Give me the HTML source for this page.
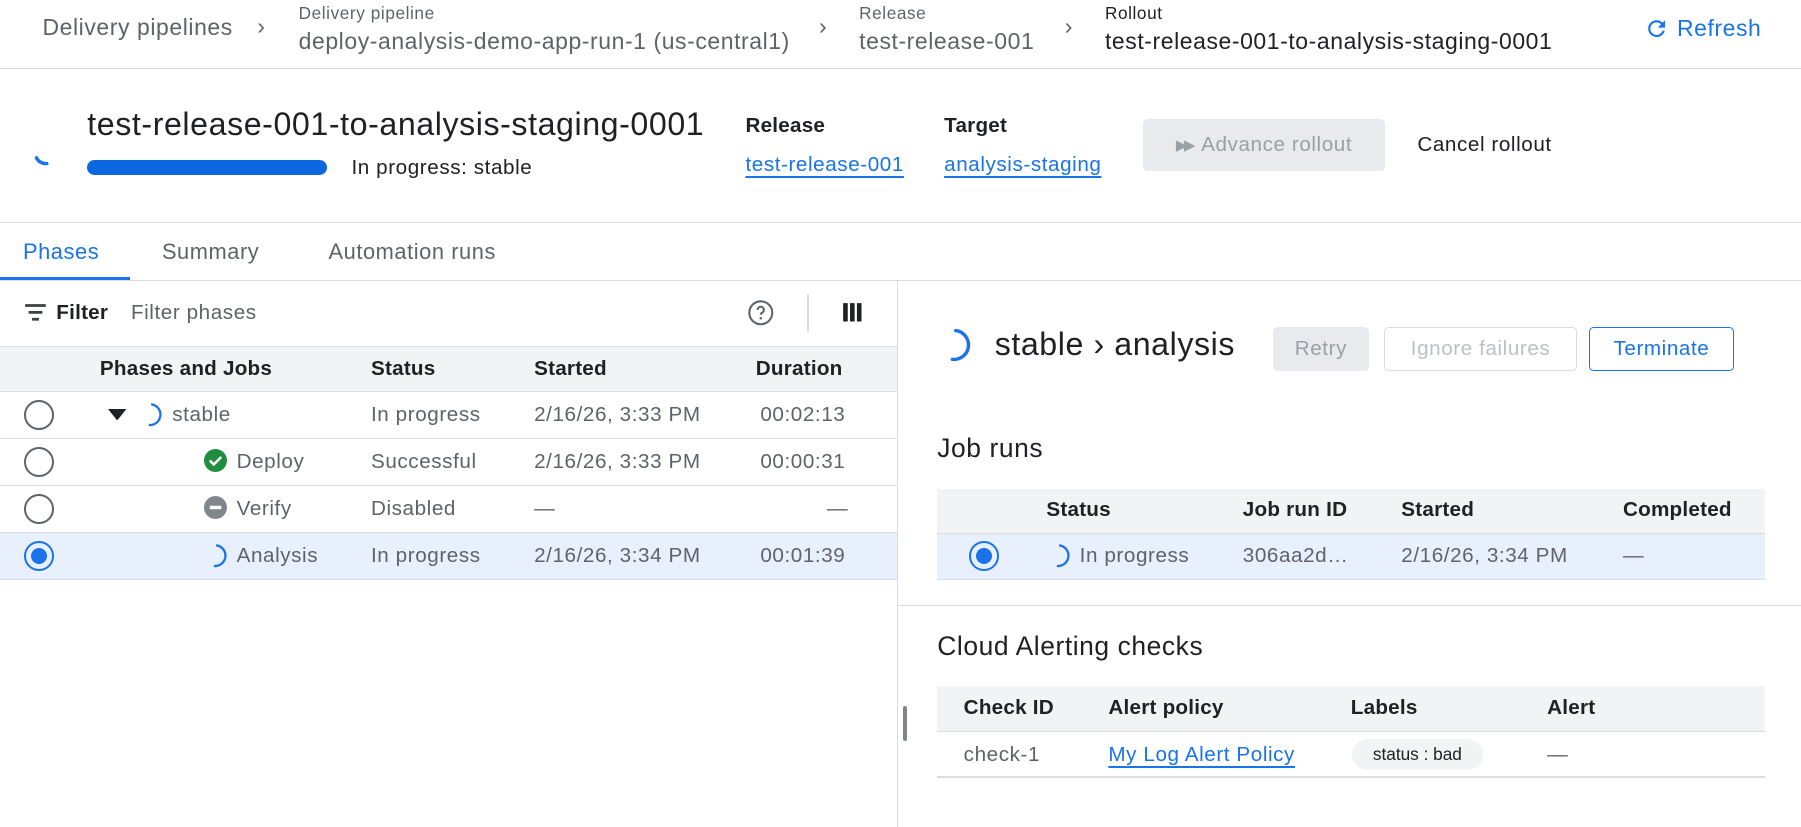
<!DOCTYPE html>
<html><head><meta charset="utf-8"><style>
*{box-sizing:border-box;margin:0;padding:0}
html,body{width:1801px;height:827px;overflow:hidden;background:#fff}
#w{width:1568px;height:720px;position:relative;zoom:1.14860;font-family:"Liberation Sans",Arial,sans-serif;color:#202124;letter-spacing:0.5px}
.a{position:absolute;white-space:nowrap}
.g{color:#5f6368}
.b{color:#1a73e8}
.hl{position:absolute;height:1px;background:#dadce0}
.lnk{color:#1a73e8;text-decoration:underline;text-underline-offset:4px}
.rad{position:absolute;width:26px;height:26px;border:2px solid #5f6368;border-radius:50%}
.rad.on{border-color:#1a73e8}
.rad.on:after{content:"";position:absolute;left:4px;top:4px;width:14px;height:14px;border-radius:50%;background:#1a73e8}
.btn{position:absolute;border-radius:4px;font-size:18px;display:flex;align-items:center;justify-content:center}
.t{font-size:18px}
.h{font-size:18px;font-weight:bold;letter-spacing:0.2px}
</style></head><body><div id="w">
<!-- breadcrumb -->
<div class="a g" style="left:37px;top:12px;font-size:20px">Delivery pipelines</div>
<div class="a g" style="left:224px;top:11px;font-size:20px">›</div>
<div class="a g" style="left:260px;top:3px;font-size:15px">Delivery pipeline</div>
<div class="a g" style="left:260px;top:24px;font-size:20px">deploy-analysis-demo-app-run-1 (us-central1)</div>
<div class="a g" style="left:713px;top:11px;font-size:20px">›</div>
<div class="a g" style="left:748px;top:3px;font-size:15px">Release</div>
<div class="a g" style="left:748px;top:24px;font-size:20px">test-release-001</div>
<div class="a g" style="left:927px;top:11px;font-size:20px">›</div>
<div class="a" style="left:962px;top:3px;font-size:15px">Rollout</div>
<div class="a" style="left:962px;top:24px;font-size:20px">test-release-001-to-analysis-staging-0001</div>
<svg class="a" style="left:1431px;top:14px" width="22" height="22" viewBox="0 0 24 24"><path d="M17.65 6.35A7.96 7.96 0 0 0 12 4a8 8 0 1 0 7.73 10h-2.08A6 6 0 1 1 12 6c1.66 0 3.14.69 4.22 1.78L13 11h7V4z" fill="#1a73e8"/></svg>
<div class="a b" style="left:1460px;top:13px;font-size:20px">Refresh</div>
<div class="hl" style="left:0;top:59px;width:1568px"></div>
<!-- title -->
<svg class="a" style="left:22px;top:118px" width="30" height="30" viewBox="0 0 30 30"><path d="M10 19 A9 9 0 0 0 19 24" stroke="#1a73e8" stroke-width="3" fill="none" stroke-linecap="round"/></svg>
<div class="a" style="left:76px;top:92px;font-size:28px">test-release-001-to-analysis-staging-0001</div>
<div class="a" style="left:76px;top:139px;width:209px;height:13px;border-radius:7px;background:#0b67dd"></div>
<div class="a t" style="left:306px;top:136px">In progress: stable</div>
<div class="a h" style="left:649px;top:99px">Release</div>
<div class="a lnk t" style="left:649px;top:133px">test-release-001</div>
<div class="a h" style="left:822px;top:99px">Target</div>
<div class="a lnk t" style="left:822px;top:133px">analysis-staging</div>
<div class="btn" style="left:995px;top:104px;width:211px;height:45px;background:#e8eaed;color:#9aa0a6"><span style="font-size:13px;margin-right:8px;letter-spacing:-3px">▶▶</span>Advance rollout</div>
<div class="a t" style="left:1234px;top:116px">Cancel rollout</div>
<div class="hl" style="left:0;top:193px;width:1568px"></div>
<!-- tabs -->
<div class="a b" style="left:20px;top:208px;font-size:19px">Phases</div>
<div class="a g" style="left:141px;top:208px;font-size:19px">Summary</div>
<div class="a g" style="left:286px;top:208px;font-size:19px">Automation runs</div>
<div class="a" style="left:0;top:241px;width:113px;height:3px;background:#1a73e8"></div>
<div class="hl" style="left:0;top:244px;width:1568px"></div>
<div class="a" style="left:781px;top:244px;width:1px;height:476px;background:#dadce0"></div>
<div class="a" style="left:786px;top:615px;width:4px;height:30px;border-radius:2px;background:#80868b"></div>
<!-- filter -->
<svg class="a" style="left:21px;top:263px" width="20" height="18" viewBox="0 0 20 18"><path d="M1 3h18M4 9h12M7 15h6" stroke="#3c4043" stroke-width="2.4"/></svg>
<div class="a h" style="left:49px;top:262px">Filter</div>
<div class="a g t" style="left:114px;top:262px">Filter phases</div>
<svg class="a" style="left:650px;top:260px" width="24" height="24" viewBox="0 0 24 24"><circle cx="12" cy="12" r="10" stroke="#5f6368" stroke-width="1.8" fill="none"/><path d="M9.3 9.5a2.7 2.7 0 1 1 3.8 2.4c-.8.4-1.1.9-1.1 1.8" stroke="#5f6368" stroke-width="1.8" fill="none"/><circle cx="12" cy="16.8" r="1.1" fill="#5f6368"/></svg>
<div class="a" style="left:703px;top:256px;width:1px;height:33px;background:#dadce0"></div>
<svg class="a" style="left:733px;top:263px" width="18" height="18" viewBox="0 0 18 18"><path d="M1 1h4v16H1zM7 1h4v16H7zM13 1h4v16h-4z" fill="#202124"/></svg>
<!-- left table -->
<div class="a" style="left:0;top:301px;width:781px;height:40px;background:#f1f3f4;border-top:1px solid #dadce0;border-bottom:1px solid #dadce0"></div>
<div class="a h" style="left:87px;top:311px">Phases and Jobs</div>
<div class="a h" style="left:323px;top:311px">Status</div>
<div class="a h" style="left:465px;top:311px">Started</div>
<div class="a h" style="left:658px;top:311px">Duration</div>
<div class="a" style="left:0;top:464px;width:781px;height:41px;background:#e8f0fe"></div>
<div class="hl" style="left:0;top:381px;width:781px"></div>
<div class="hl" style="left:0;top:422px;width:781px"></div>
<div class="hl" style="left:0;top:463px;width:781px"></div>
<div class="hl" style="left:0;top:504px;width:781px"></div>
<div class="rad" style="left:21px;top:348px"></div>
<div class="rad" style="left:21px;top:389px"></div>
<div class="rad" style="left:21px;top:430px"></div>
<div class="rad on" style="left:21px;top:471px"></div>
<svg class="a" style="left:94px;top:356px" width="16" height="10"><path d="M0 0h16L8 10z" fill="#202124"/></svg>
<svg class="a" style="left:124px;top:350px" width="20" height="22" viewBox="0 0 20 22"><path d="M8 2a9 9 0 0 1 -2 18" stroke="#1a73e8" stroke-width="2" fill="none"/></svg>
<div class="a g t" style="left:150px;top:351px">stable</div>
<svg class="a" style="left:178px;top:391px" width="20" height="20"><circle cx="10" cy="10" r="10" fill="#1e8e3e"/><path d="M5 10l3.5 3.5L15 7" stroke="#fff" stroke-width="2.2" fill="none"/></svg>
<div class="a g t" style="left:206px;top:392px">Deploy</div>
<svg class="a" style="left:178px;top:432px" width="20" height="20"><circle cx="10" cy="10" r="10" fill="#80868b"/><path d="M5 10h10" stroke="#fff" stroke-width="3"/></svg>
<div class="a g t" style="left:206px;top:433px">Verify</div>
<svg class="a" style="left:180px;top:473px" width="20" height="22" viewBox="0 0 20 22"><path d="M8 2a9 9 0 0 1 -2 18" stroke="#1a73e8" stroke-width="2" fill="none"/></svg>
<div class="a g t" style="left:206px;top:474px">Analysis</div>
<div class="a g t" style="left:323px;top:351px">In progress</div>
<div class="a g t" style="left:323px;top:392px">Successful</div>
<div class="a g t" style="left:323px;top:433px">Disabled</div>
<div class="a g t" style="left:323px;top:474px">In progress</div>
<div class="a g t" style="left:465px;top:351px">2/16/26, 3:33 PM</div>
<div class="a g t" style="left:465px;top:392px">2/16/26, 3:33 PM</div>
<div class="a g t" style="left:465px;top:433px">—</div>
<div class="a g t" style="left:465px;top:474px">2/16/26, 3:34 PM</div>
<div class="a g t" style="left:662px;top:351px">00:02:13</div>
<div class="a g t" style="left:662px;top:392px">00:00:31</div>
<div class="a g t" style="left:720px;top:433px">—</div>
<div class="a g t" style="left:662px;top:474px">00:01:39</div>
<!-- right panel -->
<svg class="a" style="left:820px;top:284px" width="30" height="34" viewBox="0 0 30 34"><path d="M12 4a12 12 0 0 1 -3 25" stroke="#1a73e8" stroke-width="3" fill="none" stroke-linecap="round"/></svg>
<div class="a" style="left:866px;top:284px;font-size:28px">stable › analysis</div>
<div class="btn" style="left:1108px;top:285px;width:84px;height:38px;background:#e8eaed;color:#9aa0a6">Retry</div>
<div class="btn" style="left:1205px;top:285px;width:168px;height:38px;border:1px solid #dadce0;color:#bdc1c6">Ignore failures</div>
<div class="btn" style="left:1383px;top:285px;width:127px;height:38px;border:1px solid #1a73e8;color:#1a73e8">Terminate</div>
<div class="a" style="left:816px;top:377px;font-size:23px">Job runs</div>
<div class="a" style="left:816px;top:426px;width:721px;height:39px;background:#f1f3f4;border-bottom:1px solid #dadce0"></div>
<div class="a" style="left:816px;top:465px;width:721px;height:40px;background:#e8f0fe;border-bottom:1px solid #dadce0"></div>
<div class="a h" style="left:911px;top:434px">Status</div>
<div class="a h" style="left:1082px;top:434px">Job run ID</div>
<div class="a h" style="left:1220px;top:434px">Started</div>
<div class="a h" style="left:1413px;top:434px">Completed</div>
<div class="rad on" style="left:844px;top:471px"></div>
<svg class="a" style="left:914px;top:473px" width="20" height="22" viewBox="0 0 20 22"><path d="M8 2a9 9 0 0 1 -2 18" stroke="#1a73e8" stroke-width="2" fill="none"/></svg>
<div class="a g t" style="left:940px;top:474px">In progress</div>
<div class="a g t" style="left:1082px;top:474px">306aa2d…</div>
<div class="a g t" style="left:1220px;top:474px">2/16/26, 3:34 PM</div>
<div class="a g t" style="left:1413px;top:474px">—</div>
<div class="hl" style="left:782px;top:527px;width:786px"></div>
<div class="a" style="left:816px;top:549px;font-size:23px">Cloud Alerting checks</div>
<div class="a" style="left:816px;top:597px;width:721px;height:40px;background:#f1f3f4;border-bottom:1px solid #dadce0"></div>
<div class="hl" style="left:816px;top:676px;width:721px"></div>
<div class="a h" style="left:839px;top:606px">Check ID</div>
<div class="a h" style="left:965px;top:606px">Alert policy</div>
<div class="a h" style="left:1176px;top:606px">Labels</div>
<div class="a h" style="left:1347px;top:606px">Alert</div>
<div class="a g t" style="left:839px;top:647px">check-1</div>
<div class="a lnk t" style="left:965px;top:647px">My Log Alert Policy</div>
<div class="a" style="left:1177px;top:643px;width:114px;height:27px;border-radius:14px;background:#f1f3f4;font-size:15px;letter-spacing:0;display:flex;align-items:center;justify-content:center">status : bad</div>
<div class="a g t" style="left:1347px;top:647px">—</div>
</div></body></html>
